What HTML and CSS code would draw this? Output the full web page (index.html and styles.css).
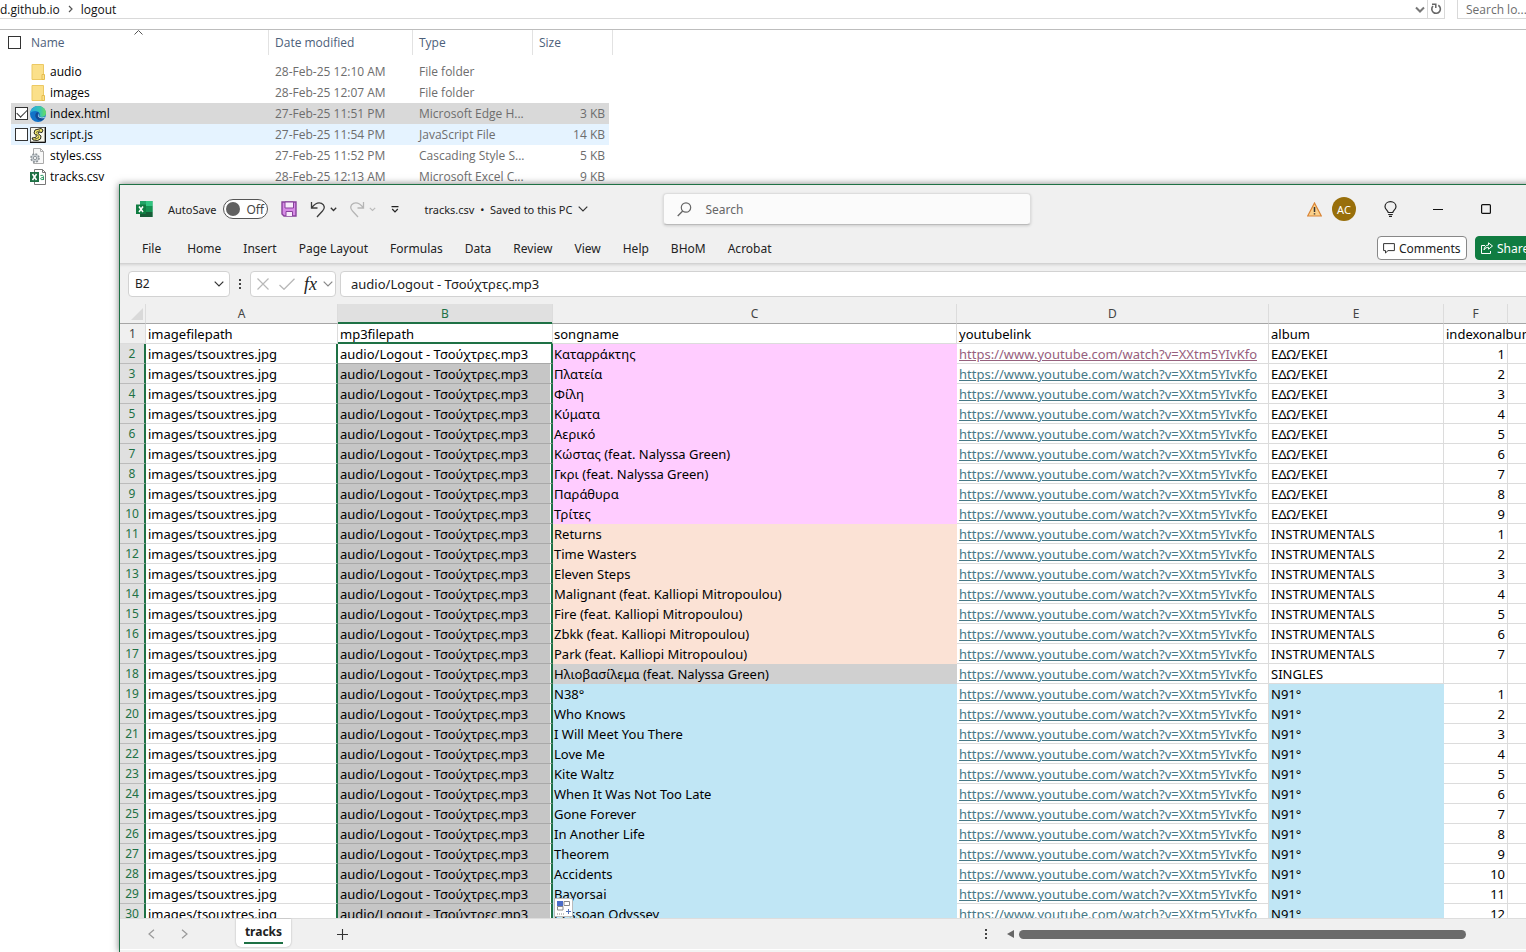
FILE: index.html
```html
<!DOCTYPE html>
<html lang="en">
<head>
<meta charset="utf-8">
<title>logout</title>
<link rel="stylesheet" href="styles.css">
</head>
<body>
<main class="desktop">
  <section class="explorer" aria-label="File Explorer">
    <div class="address-row">
      <nav class="address" aria-label="Path">
        <a href="#">d.github.io</a>
        <svg class="crumb" width="5" height="8" viewBox="0 0 5 8"><path d="M1 1l3 3-3 3" fill="none" stroke="#555" stroke-width="1.2"/></svg>
        <a href="#">logout</a>
        <button class="addr-drop" aria-label="Previous locations"><svg width="10" height="7" viewBox="0 0 10 7"><path d="M1 1.500l4 4 4-4" fill="none" stroke="#777" stroke-width="2"/></svg></button>
        <button class="addr-refresh" aria-label="Refresh"><svg width="12" height="12" viewBox="0 0 12 12"><path d="M8.300 2.300A4.300 4.300 0 1 1 3 3" fill="none" stroke="#666" stroke-width="1.600"/><path d="M2 1.200h3.800v3.800" fill="none" stroke="#666" stroke-width="1.500"/></svg></button>
      </nav>
      <input class="addr-search" type="text" aria-label="Search logout" placeholder="Search lo...">
    </div>
    <table class="files">
      <colgroup><col class="f-edge"><col class="f-name"><col class="f-date"><col class="f-type"><col class="f-size"><col class="f-end"></colgroup>
      <thead>
        <tr>
          <th colspan="2"><div class="head-name"><input type="checkbox" class="tick" aria-label="Select all"><span>Name</span><svg class="sort" width="9" height="5" viewBox="0 0 9 5"><path d="M.5 4.500l4-4 4 4" fill="none" stroke="#555"/></svg></div></th>
          <th>Date modified</th><th>Type</th><th colspan="2">Size</th>
        </tr>
      </thead>
      <tbody>
        <tr><td></td><td><div class="file"><i class="no-tick"></i><svg width="16" height="16" viewBox="0 0 16 16"><path d="M2 .5h11.500v15H2z" fill="#fbe08a" stroke="#ecc964"/><path d="M12 10.500h2.500v5H12z" fill="#fbe08a" stroke="#e5bd4e"/></svg><span>audio</span></div></td><td>28-Feb-25 12:10 AM</td><td>File folder</td><td></td></tr>
        <tr><td></td><td><div class="file"><i class="no-tick"></i><svg width="16" height="16" viewBox="0 0 16 16"><path d="M2 .5h11.500v15H2z" fill="#fbe08a" stroke="#ecc964"/><path d="M12 10.500h2.500v5H12z" fill="#fbe08a" stroke="#e5bd4e"/></svg><span>images</span></div></td><td>28-Feb-25 12:07 AM</td><td>File folder</td><td></td></tr>
        <tr class="chosen"><td></td><td><div class="file"><input type="checkbox" class="tick" aria-label="index.html" checked><svg width="16" height="16" viewBox="0 0 16 16"><defs><linearGradient id="eg" x1="0" y1="0" x2="1" y2="0"><stop offset="0" stop-color="#2aa8e0"/><stop offset=".6" stop-color="#36c4b4"/><stop offset="1" stop-color="#6ede5c"/></linearGradient></defs><circle cx="8" cy="8" r="8" fill="#1173c8"/><path d="M.2 7C1 2.500 4.300 0 8 0c4.600 0 8 3.200 8 7 0 2.700-2 4-4.300 4-1.600 0-2.600-.5-2.300-1.200.8-1 .8-2.800-.8-3.900C6 4.200 2 4.800.2 7z" fill="url(#eg)"/><path d="M7 6.300c-3 1.700-2.400 7.400 4 8.500 1.600-.6 3.200-2 3.900-3.500-2.800 1.200-6.700.6-6.700-2.300 0-1 .3-1.500.8-2-.5-.6-1.300-.9-2-.7z" fill="#124a94"/><path d="M8.700 7.200c-1 1.700-.1 4 2.600 4.200 1.500.1 2.900-.3 3.700-1l-.4 1.400c-2.600 1.200-6.400.5-6.700-2.200-.1-1 .2-1.800.8-2.400z" fill="#d8f3fa"/></svg><span>index.html</span></div></td><td>27-Feb-25 11:51 PM</td><td>Microsoft Edge H...</td><td>3 KB</td></tr>
        <tr class="hovered"><td></td><td><div class="file"><input type="checkbox" class="tick" aria-label="script.js"><svg width="16" height="16" viewBox="0 0 16 16"><path d="M.5.500h14.500v14.500H.5z" fill="#f6f6ea" stroke="#555"/><path d="M15.500 0v15.500H0" fill="none" stroke="#111"/><path d="M5 3l6-1.500 2 1.500-1 2.500-3-.5-1 1.500 3 2.500-.5 3-3 1.500-4.500-.5L2 11l3.500-.5 1-1.500L4 6z" fill="#f3e96d" stroke="#111" stroke-width=".9"/><path d="M6 5.500l4-2M6 7l3 2.500M5 12l4-1.500" stroke="#222" stroke-width=".7"/></svg><span>script.js</span></div></td><td>27-Feb-25 11:54 PM</td><td>JavaScript File</td><td>14 KB</td></tr>
        <tr><td></td><td><div class="file"><i class="no-tick"></i><svg width="16" height="16" viewBox="0 0 16 16"><path d="M3.500.500h7l3 3v12h-10z" fill="#f8f8f8" stroke="#aaa"/><path d="M10.500.500v3h3" fill="none" stroke="#aaa"/><circle cx="5" cy="10" r="4" fill="#c9ced2" stroke="#8d9499" stroke-width="1.600" stroke-dasharray="1.800 1.340"/><circle cx="5" cy="10" r="1.600" fill="#fff" stroke="#8d9499"/></svg><span>styles.css</span></div></td><td>27-Feb-25 11:52 PM</td><td>Cascading Style S...</td><td>5 KB</td></tr>
        <tr><td></td><td><div class="file"><i class="no-tick"></i><svg width="16" height="16" viewBox="0 0 16 16"><path d="M4.500.500h8l3 3v12h-11z" fill="#fff" stroke="#777"/><path d="M12.500.500v3h3" fill="none" stroke="#777"/><path d="M0 3h9v10H0z" fill="#1d7044"/><path d="M2.500 5l4 6M6.500 5l-4 6" stroke="#fff" stroke-width="1.500"/><path d="M10.500 6.500q3-1 3 1.200V11M13.500 8.500q-3 0-3 1.300t3 .7" fill="none" stroke="#2d9a63"/></svg><span>tracks.csv</span></div></td><td>28-Feb-25 12:13 AM</td><td>Microsoft Excel C...</td><td>9 KB</td></tr>
      </tbody>
    </table>
  </section>

  <section class="excel" aria-label="tracks.csv">
    <header class="titlebar">
      <svg class="logo" width="17" height="16" viewBox="0 0 17 16"><path d="M4 0h12.500v16H4z" fill="#21a366"/><path d="M10 0h6.500v5H10z" fill="#33c481"/><path d="M4 5h6v6H4z" fill="#107c41"/><path d="M10 5h6.500v6H10z" fill="#159352"/><path d="M4 11h12.500v5H4z" fill="#185c37"/><path d="M0 3.500h10v9.500H0z" fill="#107c41"/><path d="M3 5.500l4 5.500M7 5.500L3 11" stroke="#fff" stroke-width="1.500"/></svg>
      <label class="autosave"><span>AutoSave</span><input type="checkbox" role="switch"><span class="switch"><i></i>Off</span></label>
      <button class="bare save" aria-label="Save"><svg width="16" height="16" viewBox="0 0 16 16"><path d="M1 1h14v14H3l-2-2z" fill="#d78be6" stroke="#87419b" stroke-width="1.400"/><path d="M4 1h8.500v6H4z" fill="#f7eafa" stroke="#87419b"/><path d="M5 15v-4.500h6.500V15" fill="#f7eafa" stroke="#87419b"/></svg></button>
      <button class="bare undo" aria-label="Undo"><svg width="16" height="17" viewBox="0 0 16 17"><path d="M1.500 1v6h6M1.800 6.500C5 2.500 8.500 1 11.500 2.300c3.500 1.700 3.500 5.200 1 7.700L7 16" fill="none" stroke="#3b3b3b" stroke-width="1.300"/></svg></button>
      <button class="bare mini" aria-label="Undo list"><svg width="7" height="5" viewBox="0 0 7 5"><path d="M.8.800l2.700 2.700L6.200.800" fill="none" stroke="#333" stroke-width="1.300"/></svg></button>
      <button class="bare redo" aria-label="Redo"><svg width="16" height="17" viewBox="0 0 16 17"><path d="M14.500 1v6h-6M14.200 6.500C11 2.500 7.500 1 4.500 2.300 1 4 1 7.500 3.500 10L9 16" fill="none" stroke="#b5b5b5" stroke-width="1.300"/></svg></button>
      <button class="bare mini" aria-label="Redo list"><svg width="7" height="5" viewBox="0 0 7 5"><path d="M.8.800l2.700 2.700L6.200.800" fill="none" stroke="#bbb" stroke-width="1.200"/></svg></button>
      <button class="bare custom" aria-label="Customize toolbar"><svg width="8" height="7" viewBox="0 0 8 7"><path d="M.5.600h7M1.200 3L4 5.800 6.800 3" fill="none" stroke="#222" stroke-width="1.200"/></svg></button>
      <button class="bare doc">tracks.csv&nbsp; • &nbsp;Saved to this PC<svg width="10" height="6" viewBox="0 0 10 6"><path d="M.7.700L5 5 9.300.700" fill="none" stroke="#333" stroke-width="1.200"/></svg></button>
      <label class="find"><svg width="15" height="15" viewBox="0 0 15 15"><circle cx="9" cy="5.500" r="4.700" fill="none" stroke="#666" stroke-width="1.200"/><path d="M5.700 9L.7 14" stroke="#666" stroke-width="1.300"/></svg><input type="text" aria-label="Search" placeholder="Search"></label>
      <div class="right-tools">
        <svg class="warn" width="15" height="15" viewBox="0 0 15 15"><path d="M7.500 1L14.300 14H.7z" fill="#fbd08a" stroke="#d98435" stroke-width="1.200"/><path d="M7.500 5v5M7.500 11.200v1.300" stroke="#333" stroke-width="1.500"/></svg>
        <button class="avatar">AC</button>
        <button class="bare bulb" aria-label="Tips"><svg width="13" height="16" viewBox="0 0 13 16"><path d="M4.200 11.500C4 9.500 1 8.500 1 5.700 1 2.800 3.400.700 6.500.700S12 2.800 12 5.700c0 2.800-3 3.800-3.200 5.800zM4.200 13.500h4.600M5 15.300h3" fill="none" stroke="#222" stroke-width="1.200"/></svg></button>
        <button class="bare winbtn" aria-label="Minimize"><svg width="10" height="10" viewBox="0 0 10 10"><path d="M0 5.500h10" stroke="#111"/></svg></button>
        <button class="bare winbtn" aria-label="Maximize"><svg width="10" height="10" viewBox="0 0 10 10"><rect x=".6" y=".6" width="8.800" height="8.800" rx="1" fill="none" stroke="#111" stroke-width="1.200"/></svg></button>
        <button class="bare winbtn" aria-label="Close"><svg width="10" height="10" viewBox="0 0 10 10"><path d="M0 0l10 10M10 0L0 10" stroke="#111"/></svg></button>
      </div>
    </header>

    <nav class="ribbon" aria-label="Ribbon">
      <button class="bare first">File</button><button class="bare">Home</button><button class="bare">Insert</button><button class="bare">Page Layout</button><button class="bare">Formulas</button><button class="bare">Data</button><button class="bare">Review</button><button class="bare">View</button><button class="bare">Help</button><button class="bare">BHoM</button><button class="bare">Acrobat</button>
      <div class="ribbon-end">
        <button class="comments"><svg width="12" height="11" viewBox="0 0 12 11"><path d="M.6.600h10.800v7H5L2.500 10V7.600H.6z" fill="none" stroke="#333"/></svg>Comments</button>
        <button class="share"><svg width="12" height="12" viewBox="0 0 12 12"><path d="M4 3.500H.5v8h9V9M7.500.800l4 3.200-4 3.200V5.300C5.500 5.300 4 6.200 3 8c.2-2.800 1.800-4.800 4.500-5z" fill="none" stroke="#fff"/></svg>Share</button>
      </div>
    </nav>

    <div class="formula-row">
      <button class="namebox"><span>B2</span><svg width="10" height="6" viewBox="0 0 10 6"><path d="M.7.700L5 5 9.300.700" fill="none" stroke="#333" stroke-width="1.200"/></svg></button>
      <svg class="dots" width="4" height="12" viewBox="0 0 4 12"><path d="M1 1h2v2H1zM1 5h2v2H1zM1 9h2v2H1z" fill="#444"/></svg>
      <div class="fx">
        <svg width="12" height="12" viewBox="0 0 12 12"><path d="M.5.500l11 11M11.500.500l-11 11" stroke="#b8b8b8" stroke-width="1.200"/></svg>
        <svg width="16" height="12" viewBox="0 0 16 12"><path d="M.5 7l4.500 4.300L15.500.700" fill="none" stroke="#b8b8b8" stroke-width="1.300"/></svg>
        <span class="fx-text">fx</span>
        <svg width="10" height="6" viewBox="0 0 10 6"><path d="M.7.700L5 5 9.300.700" fill="none" stroke="#888" stroke-width="1.200"/></svg>
      </div>
      <input class="formula" type="text" aria-label="Formula bar" value="audio/Logout - Τσούχτρες.mp3">
    </div>

    <div class="sheet">
      <table class="grid">
        <colgroup><col class="c-num"><col class="c-a"><col class="c-b"><col class="c-c"><col class="c-d"><col class="c-e"><col class="c-f"><col></colgroup>
        <thead><tr><th class="corner"><svg width="12" height="12" viewBox="0 0 12 12"><path d="M12 0v12H0z" fill="#d9d9d9"/></svg></th><th>A</th><th class="picked">B</th><th>C</th><th>D</th><th>E</th><th>F</th><th></th></tr></thead>
        <tbody id="rows">
          <tr class="names"><th>1</th><td>imagefilepath</td><td>mp3filepath</td><td>songname</td><td>youtubelink</td><td>album</td><td>indexonalbum</td><td></td></tr>
        </tbody>
      </table>
      <button class="fill-tag" aria-label="Auto fill options"><svg width="14" height="14" viewBox="0 0 14 14"><path d="M0 0h6v5H0z" fill="#4a6cc8"/><path d="M7 .5h5.500v4H7zM.5 5.500h5.500v3.500H.5z" fill="#fff" stroke="#888"/><path d="M0 13h8" stroke="#888" stroke-dasharray="1 1"/><path d="M11.500 8v5M9 10.500h5" stroke="#5272b8"/></svg></button>
    </div>

    <footer class="sheetbar">
      <button class="bare step" aria-label="Previous sheet"><svg width="7" height="10" viewBox="0 0 7 10"><path d="M6 .7L1 5l5 4.300" fill="none" stroke="#999" stroke-width="1.200"/></svg></button>
      <button class="bare step" aria-label="Next sheet"><svg width="7" height="10" viewBox="0 0 7 10"><path d="M1 .7L6 5 1 9.300" fill="none" stroke="#999" stroke-width="1.200"/></svg></button>
      <button class="sheet-tab"><span>tracks</span></button>
      <button class="bare add" aria-label="New sheet"><svg width="11" height="11" viewBox="0 0 11 11"><path d="M5.500 0v11M0 5.500h11" stroke="#333" stroke-width="1.100"/></svg></button>
      <div class="hscroll">
        <svg class="grip" width="4" height="12" viewBox="0 0 4 12"><path d="M1 1h2v2H1zM1 5h2v2H1zM1 9h2v2H1z" fill="#444"/></svg>
        <svg width="7" height="8" viewBox="0 0 7 8"><path d="M7 0v8L0 4z" fill="#666"/></svg>
        <div class="thumb"></div>
      </div>
    </footer>
    <div class="status"></div>
  </section>
</main>
<script src="rows.js"></script>
</body>
</html>
```
FILE: styles.css
```css
* { box-sizing: border-box; }
body { margin: 0; background: #fff; color: #000; font-family: "Noto Sans", sans-serif; }
button, input { font: inherit; color: inherit; }
button { cursor: pointer; }
svg { display: block; flex: none; }
.bare { border: 0; background: none; padding: 0; }
.desktop { position: relative; height: 100vh; overflow: hidden; }

/* File explorer */
.explorer { font-family: "Open Sans", sans-serif; font-size: 12px; }
.address-row { display: flex; height: 30px; padding-bottom: 10px; border-bottom: 1px solid #bdbdbd; }
.address { flex: 1; display: flex; align-items: center; border-bottom: 1px solid #d9d9d9; border-right: 1px solid #d9d9d9; }
.address a { color: #111; text-decoration: none; }
.crumb { margin: 0 8px; }
.address button { border: 0; background: none; padding: 0; }
.addr-drop { margin-left: auto; }
.address .addr-refresh { height: 100%; margin-left: 2px; padding: 0 2px; border-left: 1px solid #d9d9d9; }
.addr-search { width: 69px; margin-left: 12px; padding: 0 0 0 8px; border: 1px solid #d9d9d9; border-width: 0 0 1px 1px; outline: 0; }
.addr-search::placeholder { color: #6d6d6d; opacity: 1; }
.files { width: 613px; table-layout: fixed; border-collapse: separate; border-spacing: 0; color: #6d6d6d; }
.f-edge { width: 11px; }
.f-name { width: 258px; }
.f-date { width: 144px; }
.f-type { width: 120px; }
.f-size { width: 76px; }
.f-end { width: 4px; }
.files th { height: 25px; padding: 0 0 0 6px; font-weight: 400; text-align: left; color: #4c607a; border-right: 1px solid #e2e2e2; }
.files thead::after { content: ""; display: block; height: 6px; }
.files td { height: 21px; padding: 0 0 0 6px; line-height: 20px; white-space: nowrap; }
.files td:nth-child(1) { padding: 0; background: #fff; }
.files td:nth-child(2) { padding: 0 0 0 4px; color: #000; }
.files td:nth-child(5) { padding: 0 4px 0 0; text-align: right; }
.files .chosen td:nth-child(n+2) { background: #d9d9d9; }
.files .hovered td:nth-child(n+2) { background: #e5f3ff; }
.head-name { position: relative; display: flex; align-items: center; gap: 10px; padding-left: 2px; }
.sort { position: absolute; left: 128px; top: -4px; }
.file { display: flex; align-items: center; gap: 2px; }
.file span { margin-left: 2px; }
.no-tick { width: 13px; }
.tick { appearance: none; display: grid; place-items: center; width: 13px; height: 13px; margin: 0; background: #fff; border: 1px solid #333; }
.tick:checked::after { content: ""; width: 9px; height: 5px; margin-top: -3px; border: solid #333; border-width: 0 0 1px 1px; transform: rotate(-45deg); }

/* Spreadsheet window */
.excel { position: absolute; left: 119px; right: -32px; top: 184px; bottom: 0; display: flex; flex-direction: column; background: #f0f0f0; border: solid #1e7145; border-width: 1px 0 0 1px; box-shadow: 0 0 7px rgba(0, 0, 0, .5); font-size: 12px; color: #222; }
.titlebar { display: flex; align-items: center; height: 48px; padding-left: 16px; }
.autosave { display: flex; align-items: center; gap: 7px; margin-left: 15px; font-size: 11px; }
.autosave input { position: absolute; opacity: 0; }
.switch { display: flex; align-items: center; gap: 6px; width: 45px; height: 20px; padding-left: 2px; background: #fff; border: 1px solid #555; border-radius: 10px; font-size: 12px; color: #444; }
.switch i { width: 14px; height: 14px; border-radius: 50%; background: #616161; }
.save { margin-left: 13px; }
.undo { margin-left: 13px; }
.mini { margin-left: 4px; }
.redo { margin-left: 12px; }
.custom { margin-left: 15px; }
.doc { display: flex; align-items: center; gap: 6px; width: 166px; margin-left: 25px; font-size: 11px; white-space: nowrap; }
.find { display: flex; align-items: center; gap: 13px; width: 368px; height: 32px; margin-left: 73px; padding-left: 13px; background: #fbfbfb; border: 1px solid #ddd; border-bottom-color: #bbb; border-radius: 4px; box-shadow: 0 1px 3px rgba(0, 0, 0, .15); }
.find input { flex: 1; border: 0; outline: 0; background: none; padding: 0; font-size: 12px; }
.find input::placeholder { color: #666; opacity: 1; }
.right-tools { display: flex; align-items: center; margin-left: auto; }
.avatar { width: 24px; height: 24px; margin-left: 10px; padding: 0; border: 0; border-radius: 50%; background: #986f0b; color: #fff; font-size: 11px; }
.bulb { margin: 0 17px 0 28px; }
.winbtn { display: grid; place-items: center; width: 48px; height: 32px; }
.ribbon { display: flex; align-items: center; gap: 22px; height: 30px; padding-left: 22px; font-size: 12px; }
.first { margin-right: 4px; }
.ribbon-end { display: flex; gap: 8px; margin-left: auto; padding-right: 10px; }
.comments, .share { display: flex; align-items: center; gap: 4px; height: 24px; padding: 0 5px; border: 1px solid #888; border-radius: 4px; background: #fff; }
.comments { width: 90px; }
.share { width: 73px; background: #107c41; border-color: #107c41; color: #fff; }
.formula-row { display: flex; align-items: center; height: 41px; padding: 0 0 1px 8px; border-top: 1px solid #d2d2d2; box-shadow: inset 0 3px 3px -2px rgba(0, 0, 0, .12); }
.namebox, .fx, .formula { height: 26px; background: #fff; border: 1px solid #d2d2d2; border-radius: 4px; }
.namebox { display: flex; align-items: center; justify-content: space-between; width: 102px; padding: 0 5px 0 6px; }
.dots { margin: 0 8px; }
.fx { display: flex; align-items: center; gap: 6px; width: 86px; padding: 0 0 0 6px; }
.fx svg:nth-child(2) { margin-left: 4px; }
.fx svg:last-child { margin-left: -2px; }
.fx-text { width: 18px; padding-left: 3px; font: italic 400 18px/20px "Liberation Serif", serif; }
.formula { flex: 1; margin-left: 4px; padding: 0 10px; outline: 0; font-size: 13px; }

/* Cells */
.sheet { position: relative; flex: 1; min-height: 0; overflow: hidden; background: #fff; }
.grid { width: 100%; table-layout: fixed; border-collapse: separate; border-spacing: 0; font-size: 13px; line-height: 18px; color: #000; }
.c-num { width: 26px; }
.c-a { width: 192px; }
.c-b { width: 215px; }
.c-c { width: 404px; }
.c-d { width: 312px; }
.c-e { width: 175px; }
.c-f { width: 64px; }
.grid td { height: 20px; padding: 0 0 0 2px; border: solid #dcdcdc; border-width: 0 1px 1px 0; white-space: nowrap; }
.grid td:nth-child(4) { padding-left: 1px; }
.grid th { height: 20px; padding: 0; font-weight: 400; font-size: 12px; color: #444; background: #f0f0f0; border: solid #dcdcdc; border-width: 0 1px 1px 0; }
.grid thead th { border-bottom-color: #a6a6a6; }
.grid thead .picked { color: #1e7145; background: #e0e0e0; border-bottom-color: #1e7145; box-shadow: inset 0 -1px #1e7145; }
.grid .corner svg { margin-left: 11px; }
.names td:nth-child(3) { border-bottom-color: #1e7145; box-shadow: inset 0 -1px #1e7145; }
.names td:nth-child(7) { border-right: 0; }
.grid .row th { color: #1e7145; background: #e0e0e0; border-bottom-color: #bbb; border-right: 2px solid #1e7145; }
.row td:nth-child(2) { border-right: 2px solid #1e7145; }
.row td:nth-child(3) { background: #c6c6c6; border-bottom-color: #a9a9a9; border-right: 2px solid #1e7145; box-shadow: inset -1px 0 #fff; }
.row:nth-child(2) td:nth-child(3) { background: #fff; }
.row td:nth-child(7) { padding-right: 2px; text-align: right; }
.row a { color: #467886; }
.row:nth-child(2) a { color: #96607d; }
.row .pink { background: #ffccff; border-color: #ffccff; }
.row .peach { background: #fbe2d5; border-color: #fbe2d5; }
.row .grey { background: #d0d0d0; border-color: #d0d0d0; }
.row .blue { background: #c0e6f5; border-color: #c0e6f5; }
.fill-tag { position: absolute; left: 434px; bottom: 1px; width: 19px; height: 19px; padding: 2px; background: #fff; border: 1px solid #bbb; }

/* Sheet tabs */
.sheetbar { display: flex; align-items: center; height: 31px; border-top: 1px solid #ddd; }
.step { margin-left: 26px; }
.step:first-child { margin-left: 28px; }
.sheet-tab { align-self: flex-start; width: 55px; height: 28px; margin-left: 48px; padding: 0 8px; border: 0; background: #fff; border-radius: 0 0 5px 5px; box-shadow: 0 0 2px rgba(0, 0, 0, .3); font-weight: 700; font-size: 12px; }
.sheet-tab span { display: block; line-height: 20px; border-bottom: 2px solid #1e7145; }
.add { margin-left: 46px; }
.hscroll { display: flex; align-items: center; width: 574px; margin-left: auto; }
.grip { margin-right: 19px; }
.thumb { width: 447px; height: 9px; margin-left: 5px; border-radius: 5px; background: #6b6b6b; }
.status { height: 3px; background: #f3f3f3; border-top: 1px solid #fff; }
```
FILE: rows.js
```js
const songs = [
  ["pink", "ΕΔΩ/ΕΚΕΙ", ["Καταρράκτης", "Πλατεία", "Φίλη", "Κύματα", "Αερικό", "Κώστας (feat. Nalyssa Green)", "Γκρι (feat. Nalyssa Green)", "Παράθυρα", "Τρίτες"]],
  ["peach", "INSTRUMENTALS", ["Returns", "Time Wasters", "Eleven Steps", "Malignant (feat. Kalliopi Mitropoulou)", "Fire (feat. Kalliopi Mitropoulou)", "Zbkk (feat. Kalliopi Mitropoulou)", "Park (feat. Kalliopi Mitropoulou)"]],
  ["grey", "SINGLES", ["Ηλιοβασίλεμα (feat. Nalyssa Green)"]],
  ["blue", "N91°", ["N38°", "Who Knows", "I Will Meet You There", "Love Me", "Kite Waltz", "When It Was Not Too Late", "Gone Forever", "In Another Life", "Theorem", "Accidents", "Bayorsai", "Pessoan Odyssey"]]
];
const body = document.getElementById("rows");
let number = 2;
for (const [tint, album, titles] of songs) {
  titles.forEach((title, i) => {
    const index = tint === "grey" ? "" : i + 1;
    const albumTint = tint === "blue" ? "blue" : "";
    body.insertAdjacentHTML("beforeend", `<tr class="row"><th>${number}</th><td>images/tsouxtres.jpg</td><td>audio/Logout - Τσούχτρες.mp3</td><td class="${tint}">${title}</td><td><a href="#">https://www.youtube.com/watch?v=XXtm5YIvKfo</a></td><td class="${albumTint}">${album}</td><td>${index}</td><td></td></tr>`);
    number += 1;
  });
}
```
